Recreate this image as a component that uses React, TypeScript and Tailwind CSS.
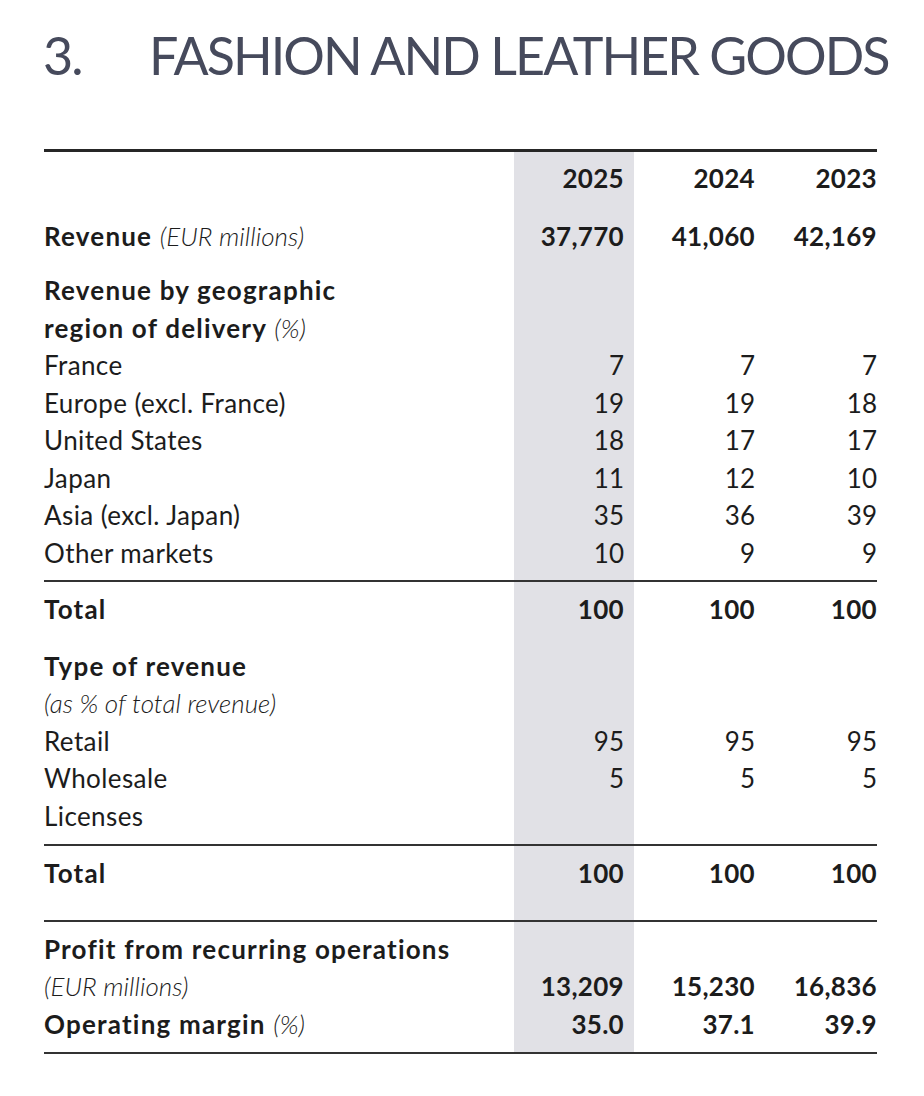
type Cells = [string, string, string]

const shade = "bg-[#e1e1e6]"

function Row({
  label,
  values,
  bold,
  pad = "",
}: {
  label: React.ReactNode
  values?: Cells
  bold?: boolean
  pad?: string
}) {
  const v = values ?? ["", "", ""]
  return (
    <div className={`grid grid-cols-[470px_120px_121px_122px] ${bold ? "font-bold" : ""}`}>
      <div className={`whitespace-nowrap ${bold ? "tracking-[1.2px]" : "tracking-[0.4px]"} ${pad}`}>{label}</div>
      <div className={`${shade} pr-[10px] text-right ${bold ? "tracking-[0.3px]" : ""} ${pad}`}>{v[0]}</div>
      <div className={`text-right ${bold ? "tracking-[0.3px]" : ""} ${pad}`}>{v[1]}</div>
      <div className={`text-right ${bold ? "tracking-[0.3px]" : ""} ${pad}`}>{v[2]}</div>
    </div>
  )
}

function Gap({ h }: { h: string }) {
  return (
    <div className="grid grid-cols-[470px_120px_121px_122px]">
      <div className={h} />
      <div className={`${shade} ${h}`} />
      <div />
      <div />
    </div>
  )
}

function Note({ children }: { children: React.ReactNode }) {
  return <span className="font-light italic tracking-[0px]">{children}</span>
}

function B({ children }: { children: React.ReactNode }) {
  return <span className="font-bold tracking-[1.2px]">{children}</span>
}

export default function App() {
  return (
    <div className="min-h-[1096px] w-[924px] bg-white font-['Lato',sans-serif] text-[#1c1c1c]">
      <h1 className="flex whitespace-nowrap pl-[43px] pt-[23px] text-[52px] leading-[64px] tracking-[-1.95px] text-[#464a5c]">
        <span className="w-[106px]">3.</span>
        <span>FASHION AND LEATHER GOODS</span>
      </h1>

      <div className="ml-[44px] mt-[62px] w-[833px] text-[26px] leading-[37.5px]">
        <div className="h-[3px] bg-[#262626]" />
        <Row label="" values={["2025", "2024", "2023"]} bold pad="pt-[8px] pb-[20px]" />
        <Row
          label={
            <>
              Revenue <Note>(EUR millions)</Note>
            </>
          }
          values={["37,770", "41,060", "42,169"]}
          bold
          pad="pb-[17px]"
        />
        <Row label={<B>Revenue by geographic</B>} />
        <Row
          label={
            <>
              <B>region of delivery</B> <Note>(%)</Note>
            </>
          }
        />
        <Row label="France" values={["7", "7", "7"]} />
        <Row label="Europe (excl. France)" values={["19", "19", "18"]} />
        <Row label="United States" values={["18", "17", "17"]} />
        <Row label="Japan" values={["11", "12", "10"]} />
        <Row label="Asia (excl. Japan)" values={["35", "36", "39"]} />
        <Row label="Other markets" values={["10", "9", "9"]} />
        <Gap h="h-[8px]" />
        <div className="h-[2px] bg-[#333]" />
        <Row label="Total" values={["100", "100", "100"]} bold pad="pt-[9px] pb-[19px]" />
        <Row label={<B>Type of revenue</B>} />
        <Row label={<Note>(as % of total revenue)</Note>} />
        <Row label="Retail" values={["95", "95", "95"]} />
        <Row label="Wholesale" values={["5", "5", "5"]} />
        <Row label="Licenses" />
        <Gap h="h-[9px]" />
        <div className="h-[2px] bg-[#333]" />
        <Row label="Total" values={["100", "100", "100"]} bold pad="pt-[9px] pb-[27px]" />
        <div className="h-[2px] bg-[#333]" />
        <Row label="Profit from recurring operations" bold pad="pt-[9px]" />
        <Row label={<Note>(EUR millions)</Note>} values={["13,209", "15,230", "16,836"]} bold />
        <Row
          label={
            <>
              Operating margin <Note>(%)</Note>
            </>
          }
          values={["35.0", "37.1", "39.9"]}
          bold
          pad="pb-[9px]"
        />
        <div className="h-[2px] bg-[#333]" />
      </div>
    </div>
  )
}
